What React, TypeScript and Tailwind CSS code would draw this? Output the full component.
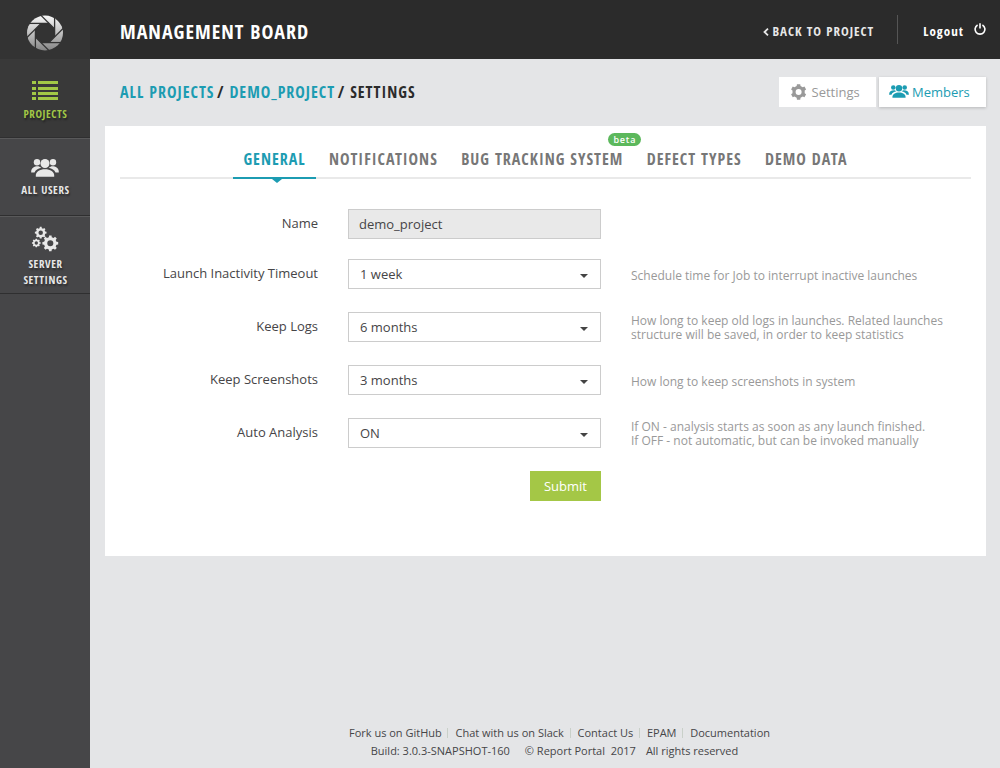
import type { ReactNode } from "react";

const cond = "font-['Open_Sans_Condensed','Open_Sans',sans-serif] font-bold";

function gearPath(cx: number, cy: number, r: number, teeth: number) {
  const pts: string[] = [];
  const step = (Math.PI * 2) / teeth;
  const inner = r * 0.79;
  for (let i = 0; i < teeth; i++) {
    const a = i * step - Math.PI / 2;
    const corners: [number, number][] = [
      [a - step * 0.3, inner],
      [a - step * 0.2, r],
      [a + step * 0.2, r],
      [a + step * 0.3, inner],
    ];
    corners.forEach(([ang, rad]) =>
      pts.push(`${(cx + Math.cos(ang) * rad).toFixed(2)} ${(cy + Math.sin(ang) * rad).toFixed(2)}`)
    );
  }
  const h = r * 0.38;
  return `M${pts.join("L")}Z M${cx - h} ${cy}a${h} ${h} 0 1 0 ${h * 2} 0a${h} ${h} 0 1 0 ${-h * 2} 0Z`;
}

function Logo() {
  return (
    <svg viewBox="-18 -18 36 36" className="h-9 w-9">
      <defs>
        <linearGradient id="steel" x1="0" y1="0" x2="0" y2="1">
          <stop offset="0" stopColor="#f8f8f8" />
          <stop offset="0.5" stopColor="#c0c0c0" />
          <stop offset="1" stopColor="#868686" />
        </linearGradient>
      </defs>
      <ellipse rx="18" ry="17.4" fill="url(#steel)" />
      <polygon
        points="4,-9.6 9.6,-4 9.6,4 4,9.6 -4,9.6 -9.6,4 -9.6,-4 -4,-9.6"
        fill="#333333"
      />
      {[0, 45, 90, 135, 180, 225, 270, 315].map((a) => (
        <path key={a} d="M4 -9.6L-16 -9.6" stroke="#333333" strokeWidth="1.3" transform={`rotate(${a})`} />
      ))}
    </svg>
  );
}

function UsersIcon({ className }: { className: string }) {
  return (
    <svg viewBox="0 0 28 18" className={className} fill="currentColor">
      <circle cx="14" cy="4.5" r="4.5" />
      <circle cx="6" cy="3.3" r="3.2" />
      <circle cx="22" cy="3.3" r="3.2" />
      <path d="M4.8 17.7C4.3 12.3 9 10.3 14 10.3S23.7 12.3 23.2 17.7Z" />
      <path d="M.2 13.4C-.1 9.4 3 7.1 8 7.4L10.3 8.8C7 9.5 4.5 10.9 3.5 13.4Z" />
      <path d="M27.8 13.4C28.1 9.4 25 7.1 20 7.4L17.7 8.8C21 9.5 23.5 10.9 24.5 13.4Z" />
    </svg>
  );
}

function ListIcon() {
  return (
    <svg viewBox="0 0 26 20" className="h-5 w-[26px]" fill="currentColor">
      {[0, 6, 11, 16].map((y) => (
        <path key={y} d={`M0 ${y}h4v3h-4zM6 ${y}h20v3h-20z`} />
      ))}
    </svg>
  );
}

function CogsIcon() {
  return (
    <svg viewBox="0 0 28 26" className="h-[26px] w-7" fill="currentColor" fillRule="evenodd">
      <path d={gearPath(9.7, 6.7, 5.9, 8)} />
      <path d={gearPath(5.3, 17, 4.4, 8)} />
      <path d={gearPath(19.3, 17.3, 8, 8)} />
    </svg>
  );
}

function SideItem({ icon, children, className }: { icon: ReactNode; children: ReactNode; className: string }) {
  return (
    <a
      className={`flex flex-col items-center border-b border-b-[#2f2f30] text-center text-[11px] leading-4 tracking-[0.6px] [text-shadow:1px_2px_2px_rgba(0,0,0,0.4)] ${cond} ${className}`}
    >
      {icon}
      <span className="pl-px">{children}</span>
    </a>
  );
}

function Tab({ children, active }: { children: ReactNode; active?: boolean }) {
  return (
    <a
      className={`relative h-[38px] border-b-2 px-[10px] text-[16px] leading-[37px] tracking-[1px] ${cond} ${
        active ? "border-[#1c9cb2] text-[#1c9cb2]" : "border-transparent text-[#777777]"
      }`}
    >
      {children}
      {active && (
        <span className="absolute top-[38px] left-[39px] border-x-[5px] border-t-4 border-x-transparent border-t-[#1c9cb2]" />
      )}
    </a>
  );
}

function Row({
  label,
  help,
  twoLines,
  children,
}: {
  label: string;
  help?: ReactNode;
  twoLines?: boolean;
  children: ReactNode;
}) {
  return (
    <div className="flex h-[30px] items-center">
      <div className="w-[198px] text-right">{label}</div>
      <div className="ml-[30px] w-[253px]">{children}</div>
      <div
        className={`ml-[30px] text-[12px] leading-[14px] whitespace-nowrap text-[#999999] ${
          twoLines ? "pt-[1px]" : "pt-[3px]"
        }`}
      >
        {help}
      </div>
    </div>
  );
}

function Select({ value }: { value: string }) {
  return (
    <div className="flex h-[30px] items-center justify-between border border-[#cccccc] pr-3 pl-[11px]">
      <span className="pt-[2px]">{value}</span>
      <span className="mt-[3px] border-x-4 border-t-4 border-x-transparent border-t-[#444444]" />
    </div>
  );
}

const footerLinks = ["Fork us on GitHub", "Chat with us on Slack", "Contact Us", "EPAM", "Documentation"];

export default function App() {
  return (
    <div className="flex h-[768px] w-[1000px] overflow-hidden bg-[#e4e5e7] font-['Open_Sans',sans-serif] text-[13px] text-[#464547]">
      <aside className="w-[90px] shrink-0 bg-[#464648]">
        <div className="flex h-[59px] items-center justify-center bg-[#333333] pt-[7px]">
          <Logo />
        </div>
        <SideItem icon={<ListIcon />} className="h-[79px] gap-[5px] bg-[#393939] pt-[22px] text-[#a2c846]">
          PROJECTS
        </SideItem>
        <SideItem
          icon={<UsersIcon className="h-[18px] w-7" />}
          className="h-[78px] gap-[5px] border-t border-t-[#59595a] pt-5 text-[#e8e8e8]"
        >
          ALL USERS
        </SideItem>
        <SideItem icon={<CogsIcon />} className="h-[78px] gap-1 border-t border-t-[#59595a] pt-[9px] text-[#e8e8e8]">
          SERVER
          <br />
          SETTINGS
        </SideItem>
      </aside>

      <div className="flex min-w-0 flex-1 flex-col">
        <header className={`flex h-[59px] items-center bg-[#2b2b2b] pr-[14px] pl-[30px] text-white ${cond}`}>
          <h1 className="mt-[5px] text-[20px] tracking-[1px]">MANAGEMENT BOARD</h1>
          <a className="mt-[5px] ml-auto flex items-center gap-[3.5px] text-[13px] tracking-[1px] text-[#e8e8e8]">
            <svg viewBox="0 0 6 8" className="-mt-px h-2 w-1.5" fill="none" stroke="currentColor" strokeWidth="1.8">
              <path d="M5 .7L1.5 4L5 7.3" />
            </svg>
            BACK TO PROJECT
          </a>
          <span className="mr-[25px] ml-[23px] h-[29px] w-px bg-[#555555]" />
          <a className="mt-[5px] flex items-center gap-[10px] text-[13px] tracking-[1px]">
            Logout
            <svg viewBox="0 0 12 12" className="-mt-[6px] h-3 w-3" fill="none" stroke="currentColor" strokeWidth="1.6">
              <path d="M3.6 2A4.9 4.9 0 1 0 8.4 2M6 .3V5.6" />
            </svg>
          </a>
        </header>

        <div className="mb-px flex h-[66px] items-center justify-between pr-[14px] pl-[30px]">
          <div className={`-mt-px flex text-[16px] tracking-[1px] text-[#2b2b2b] ${cond}`}>
            <a className="text-[#1c9cb2]">ALL PROJECTS</a>
            <span className="mr-[5px] ml-[2.5px]">/</span>
            <a className="text-[#1c9cb2]">DEMO_PROJECT</a>
            <span className="mr-[5px] ml-[2.5px]">/</span>
            <span>SETTINGS</span>
          </div>
          <div className="-mt-px flex gap-[3px]">
            <a className="flex h-[30px] w-[97px] items-center bg-white pl-3 text-[#999999]">
              <svg viewBox="0 0 16 16" className="mr-[4.5px] h-4 w-4" fill="currentColor" fillRule="evenodd">
                <path d={gearPath(7.6, 7.9, 7.9, 6)} />
              </svg>
              <span className="pt-[2px]">Settings</span>
            </a>
            <a className="flex h-[30px] w-[107px] items-center bg-white pl-[10px] text-[#1c9cb2] shadow-[0_1px_3px_rgba(0,0,0,0.2)]">
              <UsersIcon className="mr-[3px] -mt-px h-[13px] w-5" />
              <span className="pt-[2px]">Members</span>
            </a>
          </div>
        </div>

        <main className="mx-[15px] mr-[14px] h-[430px] bg-white px-[15px] pt-[15px]">
          <nav className="flex h-[38px] justify-center gap-[3.4px] shadow-[inset_0_-2px_0_#e9e9e9]">
            <Tab active>GENERAL</Tab>
            <Tab>NOTIFICATIONS</Tab>
            <Tab>
              BUG TRACKING SYSTEM
              <span className="absolute -top-[8px] -right-[8px] h-[13px] w-[33px] rounded-full bg-[#5cb85c] text-center font-['Open_Sans',sans-serif] text-[9px] leading-[13px] font-semibold tracking-[0.8px] text-white">
                beta
              </span>
            </Tab>
            <Tab>DEFECT TYPES</Tab>
            <Tab>DEMO DATA</Tab>
          </nav>
          <form className="mt-[30px] flex flex-col gap-[23px]">
            <div className="-mb-[3px]">
              <Row label="Name">
                <div className="flex h-[30px] items-center border border-[#cccccc] bg-[#e9e9e9] pt-[2px] pl-[10px]">
                  demo_project
                </div>
              </Row>
            </div>
            <Row label="Launch Inactivity Timeout" help="Schedule time for Job to interrupt inactive launches">
              <Select value="1 week" />
            </Row>
            <Row
              label="Keep Logs"
              twoLines
              help={
                <>
                  How long to keep old logs in launches. Related launches
                  <br />
                  structure will be saved, in order to keep statistics
                </>
              }
            >
              <Select value="6 months" />
            </Row>
            <Row label="Keep Screenshots" help="How long to keep screenshots in system">
              <Select value="3 months" />
            </Row>
            <Row
              label="Auto Analysis"
              twoLines
              help={
                <>
                  If ON - analysis starts as soon as any launch finished.
                  <br />
                  If OFF - not automatic, but can be invoked manually
                </>
              }
            >
              <Select value="ON" />
            </Row>
            <button type="button" className="ml-[410px] h-[30px] w-[71px] bg-[#a4c746] pt-[2px] font-medium text-white">
              Submit
            </button>
          </form>
        </main>

        <footer className="mt-auto flex flex-col items-center pr-[2px] pb-2 text-[11px] leading-[18px] whitespace-nowrap">
          <div className="flex pl-[31px]">
            {footerLinks.map((t, i) => (
              <span key={t} className="flex items-center">
                {i > 0 && <span className="mr-[7px] ml-[5.7px] h-[10px] w-px bg-[#c9d0c9]" />}
                {t}
              </span>
            ))}
          </div>
          <div className="flex pl-[21px]">
            <span className="mr-[15px]">Build: 3.0.3-SNAPSHOT-160</span>
            <span className="mr-[10px]">© Report Portal&nbsp; 2017</span>
            <span>All rights reserved</span>
          </div>
        </footer>
      </div>
    </div>
  );
}
